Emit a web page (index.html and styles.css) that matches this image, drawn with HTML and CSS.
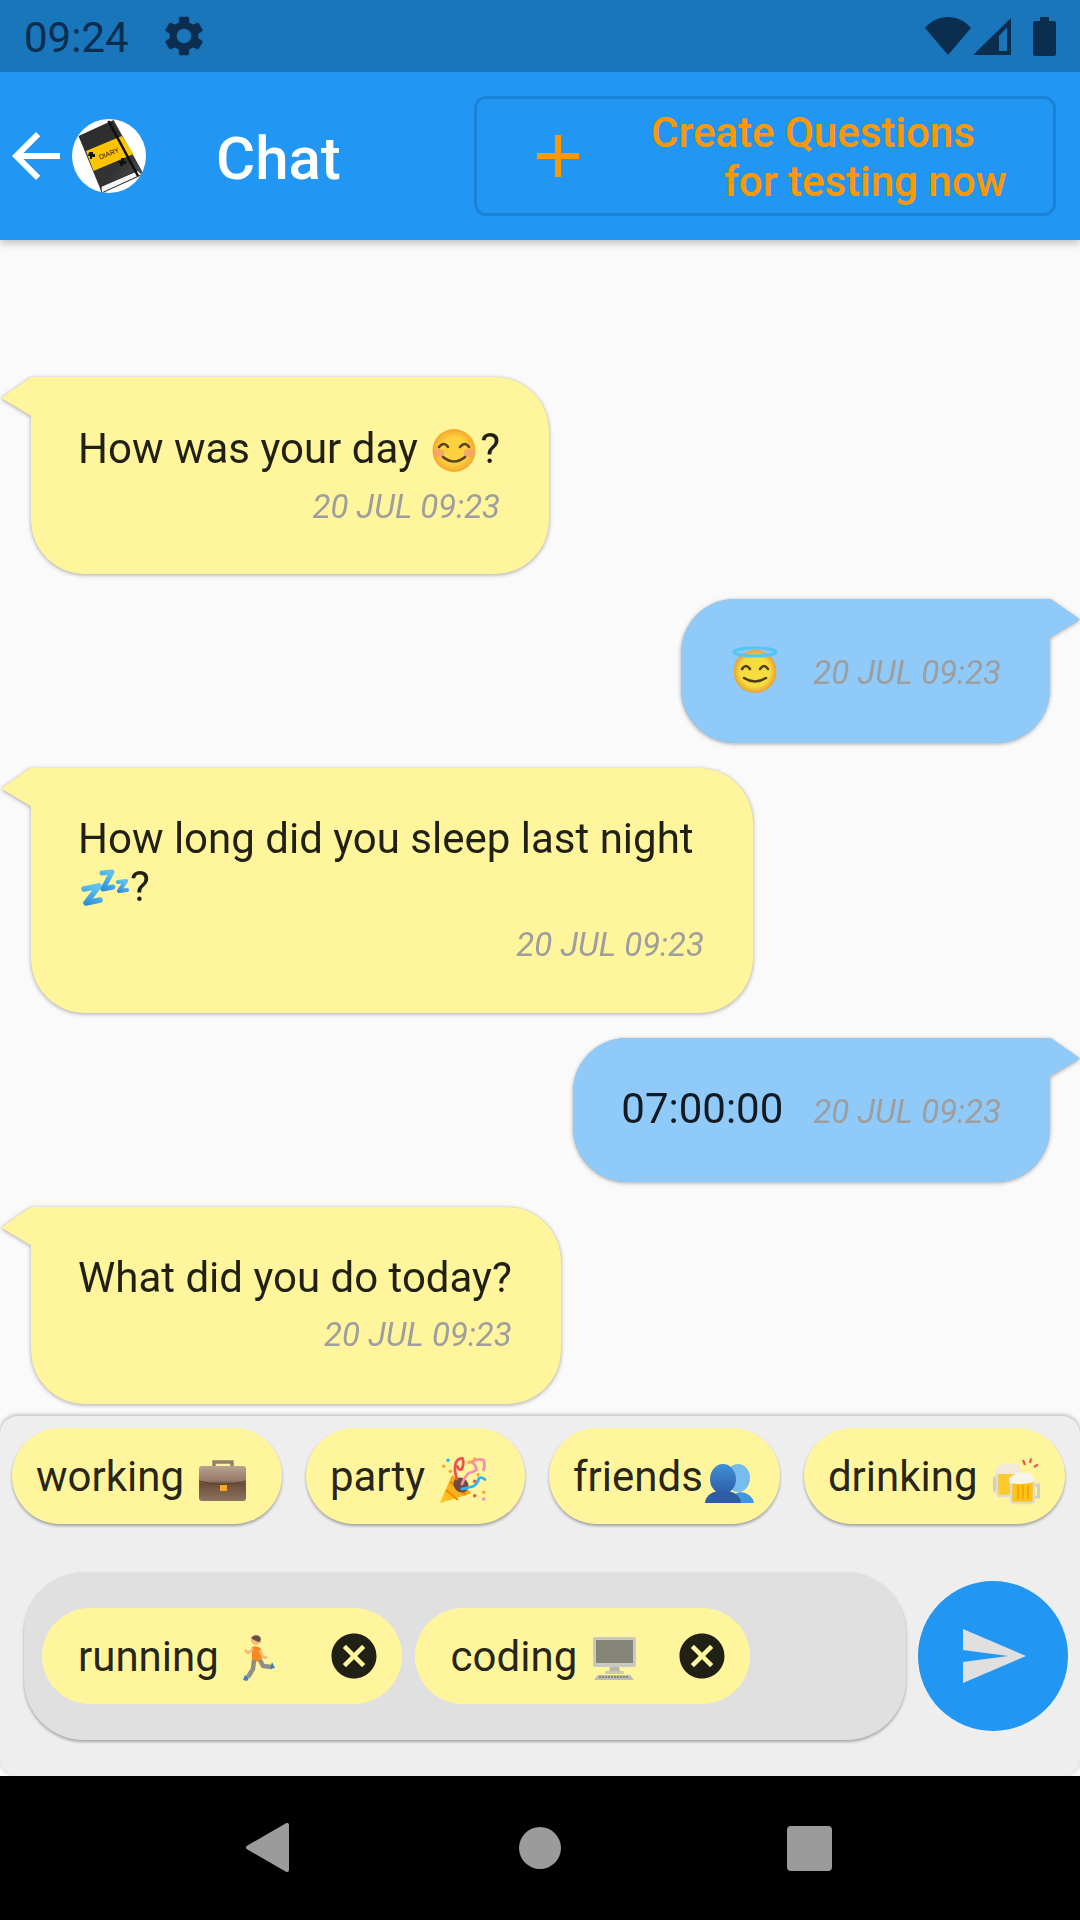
FILE: index.html
```html
<!DOCTYPE html>
<html lang="en">
<head>
<meta charset="utf-8">
<title>Chat</title>
<link rel="stylesheet" href="styles.css">
</head>
<body>
<div class="screen">
  <header class="status">
    <span class="clock">09:24</span>
    <svg class="gear" viewBox="0 0 24 24"><path d="M19.14,12.94c0.04-0.3,0.06-0.61,0.06-0.94c0-0.32-0.02-0.64-0.07-0.94l2.03-1.58c0.18-0.14,0.23-0.41,0.12-0.61l-1.92-3.32c-0.12-0.22-0.37-0.29-0.59-0.22l-2.39,0.96c-0.5-0.38-1.03-0.7-1.62-0.94L14.4,2.81c-0.04-0.24-0.24-0.41-0.48-0.41h-3.84c-0.24,0-0.43,0.17-0.47,0.41L9.25,5.35C8.66,5.59,8.12,5.92,7.63,6.29L5.24,5.33c-0.22-0.08-0.47,0-0.59,0.22L2.74,8.87C2.62,9.08,2.66,9.34,2.86,9.48l2.03,1.58C4.84,11.36,4.8,11.69,4.8,12s0.02,0.64,0.07,0.94l-2.03,1.58c-0.18,0.14-0.23,0.41-0.12,0.61l1.92,3.32c0.12,0.22,0.37,0.29,0.59,0.22l2.39-0.96c0.5,0.38,1.03,0.7,1.62,0.94l0.36,2.54c0.05,0.24,0.24,0.41,0.48,0.41h3.84c0.24,0,0.44-0.17,0.47-0.41l0.36-2.54c0.59-0.24,1.13-0.56,1.62-0.94l2.39,0.96c0.22,0.08,0.47,0,0.59-0.22l1.92-3.32c0.12-0.22,0.07-0.47-0.12-0.61L19.14,12.94z M12,15.6c-1.98,0-3.6-1.62-3.6-3.6s1.62-3.6,3.6-3.6s3.6,1.62,3.6,3.6S13.98,15.6,12,15.6z"/></svg>
    <div class="status-icons">
      <svg class="wifi" viewBox="0 0 46 38"><path d="M0 11C12-3.6 34-3.6 46 11L23 38Z"/></svg>
      <svg class="signal" viewBox="0 0 38 37"><path fill-rule="evenodd" d="M0 37 38 0V37ZM26 18V33H34V9.500Z"/></svg>
      <svg class="battery" viewBox="0 0 23 39"><path d="M7 0H16V4H21Q23 4 23 6V37Q23 39 21 39H2Q0 39 0 37V6Q0 4 2 4H7Z"/></svg>
    </div>
  </header>

  <nav class="appbar">
    <svg class="back" viewBox="0 0 24 24"><path d="M20 11H7.830l5.590-5.590L12 4l-8 8 8 8 1.410-1.410L7.830 13H20v-2z"/></svg>
    <svg class="avatar" viewBox="0 0 74 74">
      <defs>
        <clipPath id="round"><circle cx="37" cy="37" r="37"/></clipPath>
        <linearGradient id="cover" x1="0" y1="0" x2="1" y2="1"><stop offset="0" stop-color="#2b2b2b"/><stop offset="0.65" stop-color="#333"/><stop offset="1" stop-color="#5a5f5f"/></linearGradient>
      </defs>
      <circle cx="37" cy="37" r="37" fill="#fff"/>
      <g clip-path="url(#round)">
        <polygon points="6.500,17 41.500,1 70,52 70,56 30,74" fill="url(#cover)"/>
        <polygon points="29.500,74 70,55.500 66,51.500 29,67.500" fill="#f4f4f4" stroke="#111" stroke-width="0.800"/>
        <polygon points="14,32 50,17 61.500,35 21.500,52" fill="#ffc400"/>
        <line x1="36.500" y1="2" x2="66" y2="57" stroke="#0d0d0d" stroke-width="2.500"/>
        <text x="37" y="37" transform="rotate(-22 37 35)" class="diary">DIARY</text>
        <path d="M17 33h4v2h2v3h-3v2h-2v-3h-2z M46 42h3v-3h3v3h2v3h-3v2h-3v-3h-2z" fill="#111"/>
      </g>
    </svg>
    <span class="title">Chat</span>
    <button class="create">
      <svg class="plus" viewBox="0 0 24 24"><path d="M19 13h-6v6h-2v-6H5v-2h6V5h2v6h6v2z"/></svg>
      <span class="create-text"><span>Create Questions</span><span class="indent">for testing now</span></span>
    </button>
  </nav>

  <main class="chat">
    <article class="bubble left">
      <p class="msg">How was your day <svg class="emoji" viewBox="0 0 52 46" role="img" aria-label="smiling face">
        <defs><radialGradient id="face"><stop offset="0.6" stop-color="#fcd23f"/><stop offset="1" stop-color="#f4a92c"/></radialGradient></defs>
        <circle cx="26" cy="24.500" r="21.500" fill="url(#face)"/>
        <ellipse cx="11" cy="27" rx="5.500" ry="4" fill="#f29b7e" opacity="0.700"/><ellipse cx="41" cy="27" rx="5.500" ry="4" fill="#f29b7e" opacity="0.700"/>
        <path d="M11 21q5-6 9 0M32 21q5-6 9 0M15 31q11 9 22 0" fill="none" stroke="#5b4324" stroke-width="2.600" stroke-linecap="round"/>
      </svg>?</p>
      <time class="stamp">20 JUL 09:23</time>
    </article>

    <article class="bubble right">
      <span class="msg"><svg class="emoji halo" viewBox="0 0 52 46" role="img" aria-label="smiling face with halo">
        <defs><radialGradient id="face2"><stop offset="0.7" stop-color="#f7dc3e"/><stop offset="1" stop-color="#e8a034"/></radialGradient></defs>
        <circle cx="26" cy="24.500" r="21.500" fill="url(#face2)"/>
        <ellipse cx="26" cy="5" rx="21" ry="4" fill="none" stroke="#56c5f5" stroke-width="3"/>
        <path d="M13 22q4-6 8 0M31 22q4-6 8 0M15 31q11 7 22 0" fill="none" stroke="#4e3a1e" stroke-width="2.600" stroke-linecap="round"/>
      </svg></span>
      <time class="stamp">20 JUL 09:23</time>
    </article>

    <article class="bubble left">
      <p class="msg">How long did you sleep last night <svg class="emoji" viewBox="0 0 52 46" role="img" aria-label="zzz">
        <defs><linearGradient id="zz" x1="0" y1="1" x2="0.500" y2="0"><stop offset="0" stop-color="#2f8edb"/><stop offset="1" stop-color="#5cc1ee"/></linearGradient></defs>
        <g fill="none" stroke="url(#zz)" stroke-linejoin="round" stroke-linecap="round">
          <path d="M6 25 21 22 8 39 22 36" stroke-width="5.500"/>
          <path d="M24 9 34 8 25 25 35 23" stroke-width="5"/>
          <path d="M40 18 48 17 41 27 49 26" stroke-width="4.200"/>
        </g>
      </svg>?</p>
      <time class="stamp">20 JUL 09:23</time>
    </article>

    <article class="bubble right">
      <span class="msg">07:00:00</span>
      <time class="stamp">20 JUL 09:23</time>
    </article>

    <article class="bubble left">
      <p class="msg">What did you do today?</p>
      <time class="stamp">20 JUL 09:23</time>
    </article>
  </main>

  <section class="panel">
    <div class="suggestions">
      <span class="chip"><span class="chip-label">working <svg class="emoji" viewBox="0 0 52 46" role="img" aria-label="briefcase">
        <defs><linearGradient id="case" x1="0" y1="0" x2="0" y2="1"><stop offset="0" stop-color="#b8a290"/><stop offset="0.42" stop-color="#96796a"/><stop offset="0.5" stop-color="#6b4d3a"/><stop offset="1" stop-color="#8d7360"/></linearGradient></defs>
        <path d="M20 15V8h18v7" fill="none" stroke="#93806f" stroke-width="3.500"/>
        <rect x="5" y="12" width="47" height="35" rx="3" fill="url(#case)"/>
        <path d="M5 27q23 7 47 0" fill="none" stroke="#5e4433" stroke-width="1.200"/>
        <rect x="26" y="31" width="7" height="6" fill="#f9a825"/>
      </svg> </span></span>
      <span class="chip"><span class="chip-label">party <svg class="emoji party" viewBox="0 0 52 46" role="img" aria-label="party popper">
        <defs><linearGradient id="cone" x1="0" y1="1" x2="1" y2="0"><stop offset="0" stop-color="#ffca28"/><stop offset="1" stop-color="#f59300"/></linearGradient></defs>
        <polygon points="5,48 16.500,22 34,39" fill="url(#cone)" stroke="url(#cone)" stroke-width="1.500" stroke-linejoin="round"/>
        <path d="M10 36l12 10M14 28l16 13" stroke="#ef8a00" stroke-width="2"/>
        <ellipse cx="25" cy="31" rx="8" ry="7" transform="rotate(45 25 31)" fill="#6d4c41"/>
        <path d="M21 25q-3-8-1.500-15q2-6 7-5.500q2 5-1 11q-3 1-4-3" fill="none" stroke="#ef5350" stroke-width="2.800" stroke-linecap="round"/>
        <path d="M26 30q3-8 7-11q5-1 7.500-3q-1-6-5-8q6-4 12-2q2 5 0 10" fill="none" stroke="#f48fb1" stroke-width="2.800" stroke-linecap="round"/>
        <path d="M26 35q6-1 12-3q4-3 5-8q3-1 6 1.500" fill="none" stroke="#29b6f6" stroke-width="2.800" stroke-linecap="round"/>
        <g fill="#ffa726"><circle cx="7.700" cy="12.300" r="1.800"/><circle cx="14.300" cy="17.300" r="1.800"/><circle cx="33.300" cy="8.300" r="1.800"/><circle cx="38.700" cy="5" r="1.800"/><circle cx="42" cy="20.700" r="1.600"/><circle cx="47.700" cy="38.300" r="1.800"/></g>
        <circle cx="12" cy="6.300" r="1.800" fill="#29b6f6"/>
        <g fill="#ef5350"><circle cx="38.700" cy="27.300" r="1.800"/><circle cx="38.700" cy="41.700" r="1.800"/></g>
        <circle cx="47.700" cy="45" r="1.800" fill="#f48fb1"/>
      </svg> </span></span>
      <span class="chip"><span class="chip-label">friends<svg class="emoji" viewBox="0 0 52 46" role="img" aria-label="two people">
        <defs><linearGradient id="front" x1="0" y1="0" x2="0" y2="1"><stop offset="0" stop-color="#3f90d6"/><stop offset="1" stop-color="#2e5da8"/></linearGradient></defs>
        <ellipse cx="35" cy="24" rx="12" ry="14" fill="#76bcec"/>
        <path d="M27 49q0-9 10-11q12 1 14 11z" fill="#3d97e3"/>
        <ellipse cx="20" cy="25" rx="13" ry="15" fill="url(#front)"/>
        <path d="M2 49q1-10 13-12h10q12 2 13 12z" fill="#2e5da8"/>
      </svg></span></span>
      <span class="chip"><span class="chip-label">drinking <svg class="emoji" viewBox="0 0 52 46" role="img" aria-label="clinking beer mugs">
        <g fill="none" stroke="#cfcfc6" stroke-width="3"><path d="M10 24H6.500v12H11"/><path d="M46 31h4.500v12H46"/></g>
        <rect x="9" y="18" width="21" height="24" rx="3" fill="#fdc92b" stroke="#dcdcd3" stroke-width="2.500"/>
        <rect x="23" y="26" width="23" height="23" rx="3" fill="#fcc419" stroke="#dcdcd3" stroke-width="2.500"/>
        <path d="M30 31v14M35 31v14M40 31v14" stroke="#f6a800" stroke-width="2"/>
        <path d="M8 20q-2-7 5-9q3-3 9-1q8-2 10 4q3 5-3 6z" fill="#f1ead9"/>
        <path d="M22 29q-3-6 4-8q3-4 9-2q8-1 10 4q4 5-3 6q-12 2-20 0z" fill="#f8f4ec"/>
        <path d="M37 11l-2-5M42 9l1-4.500M46 13l4-2.500" stroke="#ef5350" stroke-width="2.200"/>
      </svg></span></span>
    </div>
    <div class="compose">
      <div class="field">
        <span class="chip selected"><span class="chip-label">running <svg class="emoji" viewBox="0 0 52 46" role="img" aria-label="person running">
          <circle cx="27" cy="6" r="5" fill="#f5b97e"/>
          <path d="M22 4q3-4 8-2q3 2 1 6q-4 0-9-4z" fill="#6d4c41"/>
          <path d="M23 13q6-2 9 2l1 11q-5 3-10 0z" fill="#f58a1f"/>
          <path d="M24 15l-5 4-3-3M31 16l3 7 4 1" fill="none" stroke="#f5b97e" stroke-width="2.800" stroke-linejoin="round"/>
          <path d="M25 26l-1 9-5 8M31 26l3 6 9 1" fill="none" stroke="#8f8f86" stroke-width="4.500" stroke-linejoin="round"/>
          <path d="M16 41l4 3-2 3-4-1zM43 28l3 6-5 1z" fill="#3f7fc4"/>
        </svg> </span>
          <svg class="remove" viewBox="0 0 24 24"><use href="#cancel"/></svg></span>
        <span class="chip selected"><span class="chip-label">coding <svg class="emoji" viewBox="0 0 52 46" role="img" aria-label="desktop computer">
          <rect x="5" y="3" width="43" height="30" rx="2" fill="#c9c9bf"/>
          <rect x="8" y="6" width="37" height="23" fill="#85857a"/>
          <path d="M22 33h9l1 5H21z" fill="#b7b7ad"/>
          <rect x="17" y="37" width="19" height="3" rx="1" fill="#c9c9bf"/>
          <path d="M10 41H42L46 46H6Z" fill="#bdbdb3"/>
          <path d="M11 43H41" stroke="#77776d" stroke-width="1.500" stroke-dasharray="2 1"/>
        </svg></span>
          <svg class="remove" viewBox="0 0 24 24"><use href="#cancel"/></svg></span>
      </div>
      <button class="send">
        <svg viewBox="0 0 24 24"><path d="M2.010 21 23 12 2.010 3 2 10l15 2-15 2z"/></svg>
      </button>
    </div>
  </section>

  <footer class="navbar">
    <svg class="nav-back" viewBox="0 0 43 49"><polygon points="2,24.500 41,2 41,47"/></svg>
    <span class="nav-home"></span>
    <span class="nav-recent"></span>
  </footer>
</div>
<svg class="defs" width="0" height="0"><defs><path id="cancel" d="M12 2C6.470 2 2 6.470 2 12s4.470 10 10 10 10-4.470 10-10S17.530 2 12 2zm5 13.590L15.590 17 12 13.410 8.410 17 7 15.590 10.590 12 7 8.410 8.410 7 12 10.590 15.590 7 17 8.410 13.410 12 17 15.590z"/></defs></svg>
</body>
</html>
```

FILE: styles.css
```css
* { box-sizing: border-box; }
html, body { margin: 0; padding: 0; }
body { width: 1080px; height: 1920px; overflow: hidden; background: #fafafa; font-family: Roboto, "Noto Sans", sans-serif; color: rgba(0,0,0,.87); }
.defs { position: absolute; }
.screen { width: 1080px; height: 1920px; display: flex; flex-direction: column; }

.status { height: 72px; flex: none; display: flex; align-items: center; padding: 0 24px; background: #1976bb; color: #0b2e4f; font-size: 42px; position: relative; z-index: 3; }
.clock { margin-top: 3px; line-height: 49px; }
.status svg { fill: #0b2e4f; display: block; }
.gear { width: 48px; height: 48px; margin-left: 31px; }
.status-icons { margin-left: auto; display: flex; align-items: center; }
.wifi { width: 46px; height: 38px; }
.signal { width: 38px; height: 37px; margin-left: 2px; }
.battery { width: 23px; height: 39px; margin-left: 22px; }

.appbar { height: 168px; flex: none; display: flex; align-items: center; padding-right: 24px; background: #2196f3; box-shadow: 0 3px 8px rgba(0,0,0,.25); position: relative; z-index: 2; }
.back { width: 72px; height: 72px; fill: #fff; flex: none; }
.avatar { width: 74px; height: 74px; flex: none; }
.diary { font: 7px "Liberation Sans", sans-serif; text-anchor: middle; fill: #222; }
.title { margin: 5px 0 0 70px; font-size: 60px; font-weight: 500; color: #fff; line-height: 70px; }
.create { margin-left: auto; width: 582px; height: 120px; padding: 0 0 0 45px; display: flex; align-items: center; background: transparent; border: 3px solid #1b82d9; border-radius: 12px; font: 500 42px/49px Roboto, sans-serif; color: #ff9800; }
.plus { width: 72px; height: 72px; fill: #ff9800; flex: none; }
.create-text { margin: 1px 0 0 57px; display: flex; flex-direction: column; align-items: flex-start; white-space: nowrap; }
.indent { padding-left: 73px; }

.chat { flex: 1; min-height: 0; padding-top: 137px; display: flex; flex-direction: column; gap: 24.5px; overflow: hidden; }
.bubble { position: relative; max-width: 722px; padding: 47px 49px 49.5px 47px; border-radius: 54px; filter: drop-shadow(0 1.5px 2px rgba(0,0,0,.28)) drop-shadow(0 0 .5px rgba(0,0,0,.2)); font-size: 42px; line-height: 48.5px; }
.bubble:first-child { padding-top: 48px; padding-bottom: 48.5px; }
.bubble::before { content: ""; position: absolute; top: 0; width: 32px; height: 40px; background: inherit; }
.left { align-self: flex-start; margin-left: 31px; background: #fff59d; border-top-left-radius: 0; }
.left::before { left: -30px; clip-path: polygon(100% 0, 94% 0, 0 21px, 94% 39px, 100% 39px); }
.right { align-self: flex-end; margin-right: 30px; padding: 47px 49px 49px 48px; background: #90caf9; border-top-right-radius: 0; display: flex; align-items: baseline; gap: 30px; }
.right::before { right: -30px; clip-path: polygon(0 0, 6% 0, 100% 21px, 6% 39px, 0 39px); }
.msg { margin: 0; }
.stamp { font-size: 33px; line-height: 39px; font-style: italic; color: #9e9e9e; }
.left .stamp { display: block; margin-top: 13px; text-align: right; }
.emoji { width: 52px; height: 46px; margin: -4px 0 -2px; vertical-align: -7px; overflow: visible; }
.halo { margin-right: 2px; }
.party { margin-right: 2px; }

.panel { height: 360px; flex: none; padding-top: 12px; background: #eee; border-radius: 18px; box-shadow: 0 -1px 4px rgba(0,0,0,.3); position: relative; z-index: 1; }
.suggestions { display: flex; gap: 24px; padding-left: 12px; }
.chip { height: 96px; display: flex; align-items: center; padding: 0 25px 0 24px; border-radius: 48px; background: #fff59d; font-size: 42px; line-height: 49px; white-space: pre; box-shadow: 0 2px 3px rgba(0,0,0,.32); }
.compose { display: flex; align-items: center; margin-top: 48px; padding-left: 24px; }
.field { width: 882px; height: 168px; display: flex; align-items: center; gap: 13px; padding-left: 18px; background: #e0e0e0; border-radius: 60px; box-shadow: 0 2px 3px rgba(0,0,0,.3); }
.selected { padding: 0 21px 0 36px; box-shadow: none; }
.remove { width: 54px; height: 54px; margin-left: 35px; fill: rgba(0,0,0,.87); flex: none; }
.send { width: 150px; height: 150px; margin-left: 12px; padding: 0; display: flex; align-items: center; justify-content: center; border: 0; border-radius: 50%; background: #2196f3; }
.send svg { width: 72px; height: 72px; fill: #e0e0e0; }

.navbar { height: 144px; flex: none; display: flex; align-items: center; justify-content: center; padding-right: 3px; background: #000; position: relative; z-index: 2; }
.nav-back { width: 43px; height: 49px; fill: #9b9b9b; stroke: #9b9b9b; stroke-width: 4px; stroke-linejoin: round; margin-top: -1px; }
.nav-home { width: 42px; height: 42px; margin-left: 230px; border-radius: 50%; background: #9b9b9b; }
.nav-recent { width: 45px; height: 45px; margin-left: 226px; border-radius: 4px; background: #9b9b9b; }
```
